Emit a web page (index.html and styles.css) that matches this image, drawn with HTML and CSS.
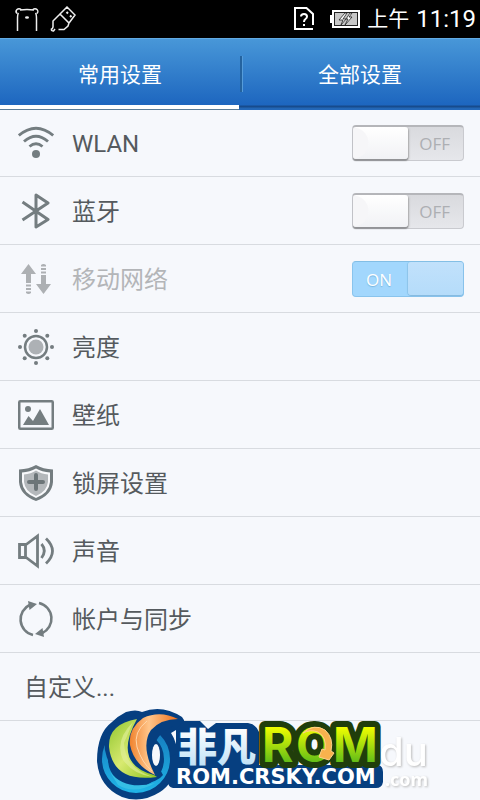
FILE: index.html
```html
<!DOCTYPE html>
<html lang="zh-CN">
<head>
<meta charset="utf-8">
<meta name="viewport" content="width=device-width, initial-scale=1">
<title>设置</title>
<link rel="stylesheet" href="styles.css">
</head>
<body>
<header class="status">
  <div class="status-left">
    <svg width="26" height="26" viewBox="0 0 26 26" fill="none" stroke="#eee" stroke-width="1.5" aria-hidden="true">
      <path d="M3.500 25V13Q3.500 8 4.500 7M22.500 25V13Q22.500 8 21.500 7M6 4Q13 3 20 4M3 7.500A2.600 2.600 0 1 1 7 3.500M23 7.500A2.600 2.600 0 1 0 19 3.500"/>
      <ellipse cx="13" cy="11.500" rx="2" ry="1.300" fill="#eee" stroke="none"/>
    </svg>
    <svg width="26" height="26" viewBox="0 0 26 26" fill="none" stroke="#eee" stroke-width="1.500" aria-hidden="true">
      <path d="M17 1L25 9L19 17L10 8ZM10 8L3 15V21Q2.500 23 1.500 23Q1 25 3.500 25L5 23M19 17L18 20L14 23.500H8.500"/>
      <path d="M16.500 6L18 7.500M20 9.500L21.500 11" stroke-width="2"/>
    </svg>
  </div>
  <div class="status-right">
    <svg class="sim" width="20" height="24" viewBox="0 0 20 24" fill="none" stroke="#fff" stroke-width="2" aria-hidden="true">
      <path d="M19 22H1V1H12.500L19 7V18"/>
      <path d="M7 9.500Q7 7 10 7Q13 7 13 9.500Q13 11 11.500 12Q10 13 10 15M10 17V19"/>
    </svg>
    <svg class="battery" width="30" height="18" viewBox="0 0 30 18" aria-hidden="true">
      <path fill="#fff" d="M2 0H30V18H2V13H0V5H2Z"/><path d="M4 2H28V16H4Z" fill="#222"/><path d="M5 3H27V15H5Z" fill="#c8c8c8"/>
      <path d="M15 3L9 10H13L11 15L16 9H13L17 3ZM20 3L16 9H18L15 15L22 7H19L22 3Z" fill="#fff" stroke="#222" stroke-width=".8"/>
    </svg>
    <span class="period">上午</span>
    <time>11:19</time>
  </div>
</header>
<nav class="tabs">
  <button type="button" class="tab active">常用设置</button>
  <button type="button" class="tab">全部设置</button>
</nav>
<main>
<ul class="list">
  <li class="row">
    <svg class="icon" viewBox="0 0 36 36" fill="none" stroke="#747d80" stroke-width="2.900" aria-hidden="true"><path d="M.8 10.500Q18-4 35.200 10.500M6 16.500Q18 6 30 16.500M11.500 21.500Q18 16 24.500 21.500"/><circle cx="18" cy="29" r="4" fill="#747d80" stroke="none"/></svg>
    <label class="name" for="wlan">WLAN</label>
    <span class="switch"><input type="checkbox" id="wlan"><span class="off">OFF</span></span>
  </li>
  <li class="row">
    <svg class="icon" viewBox="0 0 36 36" fill="none" stroke="#747d80" stroke-width="3" stroke-linejoin="round" aria-hidden="true"><path d="M4.500 9L30 26.500L18 34V2L30 10L4.500 27"/></svg>
    <label class="name" for="bt">蓝牙</label>
    <span class="switch"><input type="checkbox" id="bt"><span class="off">OFF</span></span>
  </li>
  <li class="row disabled">
    <svg class="icon" viewBox="0 0 36 36" fill="#adb0b3" aria-hidden="true"><path d="M10.500 3L18 13H13V22H8V13H3ZM8 23.500H13V25.500H8ZM8 27H13V29H8ZM8 30.500H13V32Q10.500 34 8 32ZM25.500 33L18 23H23V14H28V23H33ZM23 12.500H28V10.500H23ZM23 9H28V7H23ZM23 5.500H28V4Q25.500 2 23 4Z"/></svg>
    <label class="name" for="data">移动网络</label>
    <span class="switch"><input type="checkbox" id="data" checked disabled><span class="on">ON</span></span>
  </li>
  <li class="row">
    <svg class="icon" viewBox="0 0 36 36" fill="#747d80" aria-hidden="true"><circle cx="18" cy="18" r="11" fill="none" stroke="#747d80" stroke-width="2.500"/><circle cx="18" cy="18" r="7.500" fill="#adb1b5"/><circle cx="18" cy="2" r="2"/><circle cx="18" cy="34" r="2"/><circle cx="2" cy="18" r="2"/><circle cx="34" cy="18" r="2"/><circle cx="6.700" cy="6.700" r="2"/><circle cx="29.300" cy="6.700" r="2"/><circle cx="6.700" cy="29.300" r="2"/><circle cx="29.300" cy="29.300" r="2"/></svg>
    <span class="name">亮度</span>
  </li>
  <li class="row">
    <svg class="icon" viewBox="0 0 36 36" fill="#747d80" aria-hidden="true"><rect x="1.250" y="4.250" width="33.500" height="27.500" rx="1" fill="none" stroke="#747d80" stroke-width="2.500"/><circle cx="10" cy="12" r="3"/><path d="M5 28L10.500 19L15 24L22 12L31 28Z"/></svg>
    <span class="name">壁纸</span>
  </li>
  <li class="row">
    <svg class="icon" viewBox="0 0 36 36" aria-hidden="true"><path d="M18 0Q25 4 35 4.500V17Q34 30 18 36Q2 30 1 17V4.500Q11 4 18 0Z" fill="#747d80"/><path d="M18 3.500Q24 7 32 7.500V17Q31 28 18 33Q5 28 4 17V7.500Q12 7 18 3.500Z" fill="#f8f9fb"/><path d="M18 5.500Q23 9 30 9.500V17Q29 26.500 18 31Q7 26.500 6 17V9.500Q13 9 18 5.500Z" fill="#b4b8bb"/><path d="M18 10V24M11 17H25" stroke="#6c7578" stroke-width="4" stroke-linecap="round"/></svg>
    <span class="name">锁屏设置</span>
  </li>
  <li class="row">
    <svg class="icon" viewBox="0 0 36 36" fill="none" stroke="#747d80" stroke-width="2.800" aria-hidden="true"><path d="M1.500 11.500H7.500V24.500H1.500ZM7.500 12L19.500 3V33L7.500 24M23.500 11Q29 17.500 23.500 25M28 5.500Q41 18 28 30.500"/></svg>
    <span class="name">声音</span>
  </li>
  <li class="row">
    <svg class="icon" viewBox="0 0 36 36" fill="none" stroke="#747d80" stroke-width="2.600" aria-hidden="true"><path d="M15 34A16 16 0 0 1 12 3.800M21 2A16 16 0 0 1 24 32.200"/><path d="M10 0L19 3L11.500 9ZM26 36L17 33L24.500 27Z" fill="#747d80" stroke="none"/></svg>
    <span class="name">帐户与同步</span>
  </li>
  <li class="row custom"><span class="name">自定义...</span></li>
</ul>
</main>
<svg class="watermark" width="340" height="92" viewBox="94 708 340 92" role="img" aria-label="ROM.CRSKY.COM">
  <defs>
    <linearGradient id="g" x1="0" y1="0" x2="0" y2="1"><stop offset=".2" stop-color="#f2ff00"/><stop offset=".8" stop-color="#62bd18"/></linearGradient>
    <linearGradient id="w" x1="0" y1="0" x2="0" y2="1"><stop offset=".2" stop-color="#fff"/><stop offset="1" stop-color="#b5ddf5"/></linearGradient>
    <linearGradient id="o" x1="0" y1="0" x2="1" y2="0"><stop offset="0" stop-color="#f0832e"/><stop offset=".4" stop-color="#ffc58a"/><stop offset="1" stop-color="#ef6f18"/></linearGradient>
    <linearGradient id="l" x1="0" y1="0" x2="1" y2="1"><stop offset="0" stop-color="#8fc52e"/><stop offset=".5" stop-color="#d8ea70"/><stop offset="1" stop-color="#8cc31f"/></linearGradient>
    <linearGradient id="b" x1="0" y1="0" x2="0" y2="1"><stop offset="0" stop-color="#1579bd"/><stop offset="1" stop-color="#20b3e5"/></linearGradient>
  </defs>
  <g class="faded"><text class="du" x="379" y="766">du</text><text class="com" x="385" y="786">.com</text></g>
  <path fill="#063f80" d="M126 712Q136 709 142 712Q162 704 182 717Q187 723 181 727L171 733Q179 745 177 763Q174 783 160 792Q141 804 122 797Q99 787 97 761Q97 733 112 722Q118 716 126 712Z"/>
  <path fill="#063f80" d="M184 721H200L208 729L216 723H248Q256 724 259 732V765H378Q383 766 383 772V782Q382 788 376 788H173Q168 787 168 782V758L176 754V729Z"/>
  <circle cx="136" cy="759" r="31" fill="none" stroke="url(#b)" stroke-width="6"/>
  <path fill="#063f80" d="M138 715Q102 720 105 750Q111 782 142 784Q158 782 163 775Q154 760 154 747Q157 733 174 726L160 712Z"/>
  <path fill="#35bfe5" d="M110 772Q125 791 155 783Q135 795 118 785Z"/>
  <ellipse cx="156" cy="755" rx="4" ry="11" fill="#f6f8fb"/>
  <path fill="url(#l)" d="M137 719Q108 724 109 747Q113 783 157 777L154 775Q112 764 137 719Z"/>
  <path fill="#e3f09c" opacity=".6" d="M133 722Q114 741 123 760Q134 775 153 777Q125 768 124 743Z"/>
  <path fill="url(#o)" d="M178 719Q160 710 143 718Q128 729 130 745Q134 765 155 775Q140 746 151 730Q161 719 178 719Z"/>
  <path d="M147 721Q133 732 137 747Q142 763 152 771" fill="none" stroke="#ffd6aa"/>
  <text class="brand" x="178" y="761" fill="url(#w)">非凡</text>
  <text class="rom" fill="url(#g)" x="262" y="762">R<tspan x="296">O</tspan><tspan x="333">M</tspan></text>
  <path d="M303 733Q314 723 325 730Q334 738 331 751L334 753L329 760L319 757L322 749L325 750Q327 737 318 732Q310 729 303 733Z" fill="#f8b24d" stroke="#ffd18a"/>
  <text class="site" x="176" y="784">ROM.CRSKY.COM</text>
</svg>
</body>
</html>
```

FILE: styles.css
```css
* { box-sizing: border-box; }
body {
  margin: 0;
  position: relative;
  min-height: 100vh;
  overflow-x: hidden;
  background: #f6f8fc;
  color: #555a5e;
  font-family: Roboto, "Noto Sans CJK SC", sans-serif;
}
svg { display: block; flex: none; }
.status {
  height: 38px;
  padding: 0 4px 0 14px;
  display: flex;
  align-items: center;
  justify-content: space-between;
  background: #000;
  color: #fff;
}
.status-left { display: flex; gap: 10px; }
.status-right { display: flex; align-items: center; gap: 7px; font-size: 24px; line-height: 36px; }
.battery { margin-left: 9px; }
.period { font-size: 21px; }
.tabs {
  height: 72px;
  display: flex;
  position: relative;
  background: linear-gradient(#4897d8, #1d66bf 66px, #174b8c 67px, #174b8c 68px, #2266b4 69px, #2368bb);
  border-top: 1px solid #62aae2;
}
.tabs::after {
  content: "";
  position: absolute;
  left: 50%;
  top: 17px;
  width: 2px;
  height: 36px;
  background: #24639f;
  border-right: 1px solid #559cda;
}
.tab {
  flex: 1;
  border: 0;
  padding: 0 0 4px;
  background: none;
  color: #fff;
  font: inherit;
  font-size: 21px;
  position: relative;
}
.active::after {
  content: "";
  position: absolute;
  left: 0;
  right: 1px;
  bottom: 0;
  height: 4px;
  background: #fff;
  border-bottom: 1px solid #597b96;
}
.list { list-style: none; margin: 0; padding: 0; }
.row {
  height: 68px;
  padding: 0 16px 0 18px;
  display: flex;
  align-items: center;
  gap: 18px;
  border-bottom: 1px solid #d8dbe0;
}
.row:first-child { height: 67px; }
.icon { width: 36px; height: 36px; }
.name { flex: 1; padding-top: 2px; font-size: 24px; line-height: 36px; }
.custom { padding-left: 24px; }
.disabled .name { color: #b3b5b8; }
.switch { position: relative; width: 112px; height: 36px; }
.switch input {
  appearance: none;
  display: block;
  width: 100%;
  height: 100%;
  margin: 0;
  border: 1px solid #c9cacf;
  border-top: 2px solid #b5b6ba;
  border-radius: 4px;
  background: linear-gradient(#d9dade, #e6e7eb);
}
.switch input::before {
  content: "";
  display: block;
  width: 55px;
  height: 32px;
  border-radius: 3px;
  background: radial-gradient(circle at 0 50%, #f6f6f8 15px, transparent 16px), linear-gradient(#fff, #f1f2f5);
  box-shadow: 0 2px 1px #929396, 1px 1px 2px #aaa;
}
.switch input:checked { border-color: #89c4ed; border-top: 1px solid #82bee5; background: #a2d7fd; }
.switch input:checked::before {
  margin-left: auto;
  height: 33px;
  background: linear-gradient(#c1e1fb, #b5dcfa);
  box-shadow: 0 1px 1px #83b9de, -1px 0 1px #8dc6ec;
}
.on, .off { position: absolute; top: 0; line-height: 38px; font-family: "Open Sans", sans-serif; font-size: 17px; pointer-events: none; }
.off { right: 14px; color: #adafb3; }
.on { left: 14px; color: #fff; text-shadow: 0 1px 1px #79b6de; }
.watermark { position: absolute; left: calc(50% - 146px); top: 708px; pointer-events: none; }
.faded { fill: #fff; filter: drop-shadow(1px 1px 1px #bbb); }
.du { font: 500 40px Inter, sans-serif; }
.com { font: 700 18px "Noto Sans", sans-serif; }
.brand { font: 900 39px "Noto Sans CJK SC", sans-serif; }
.rom {
  font: 700 48px Inter, sans-serif;
  stroke: #203e0b;
  stroke-width: 12px;
  stroke-linejoin: round;
  paint-order: stroke;
}
.site { font: 700 21px "DejaVu Sans", sans-serif; fill: #fff; }
```
